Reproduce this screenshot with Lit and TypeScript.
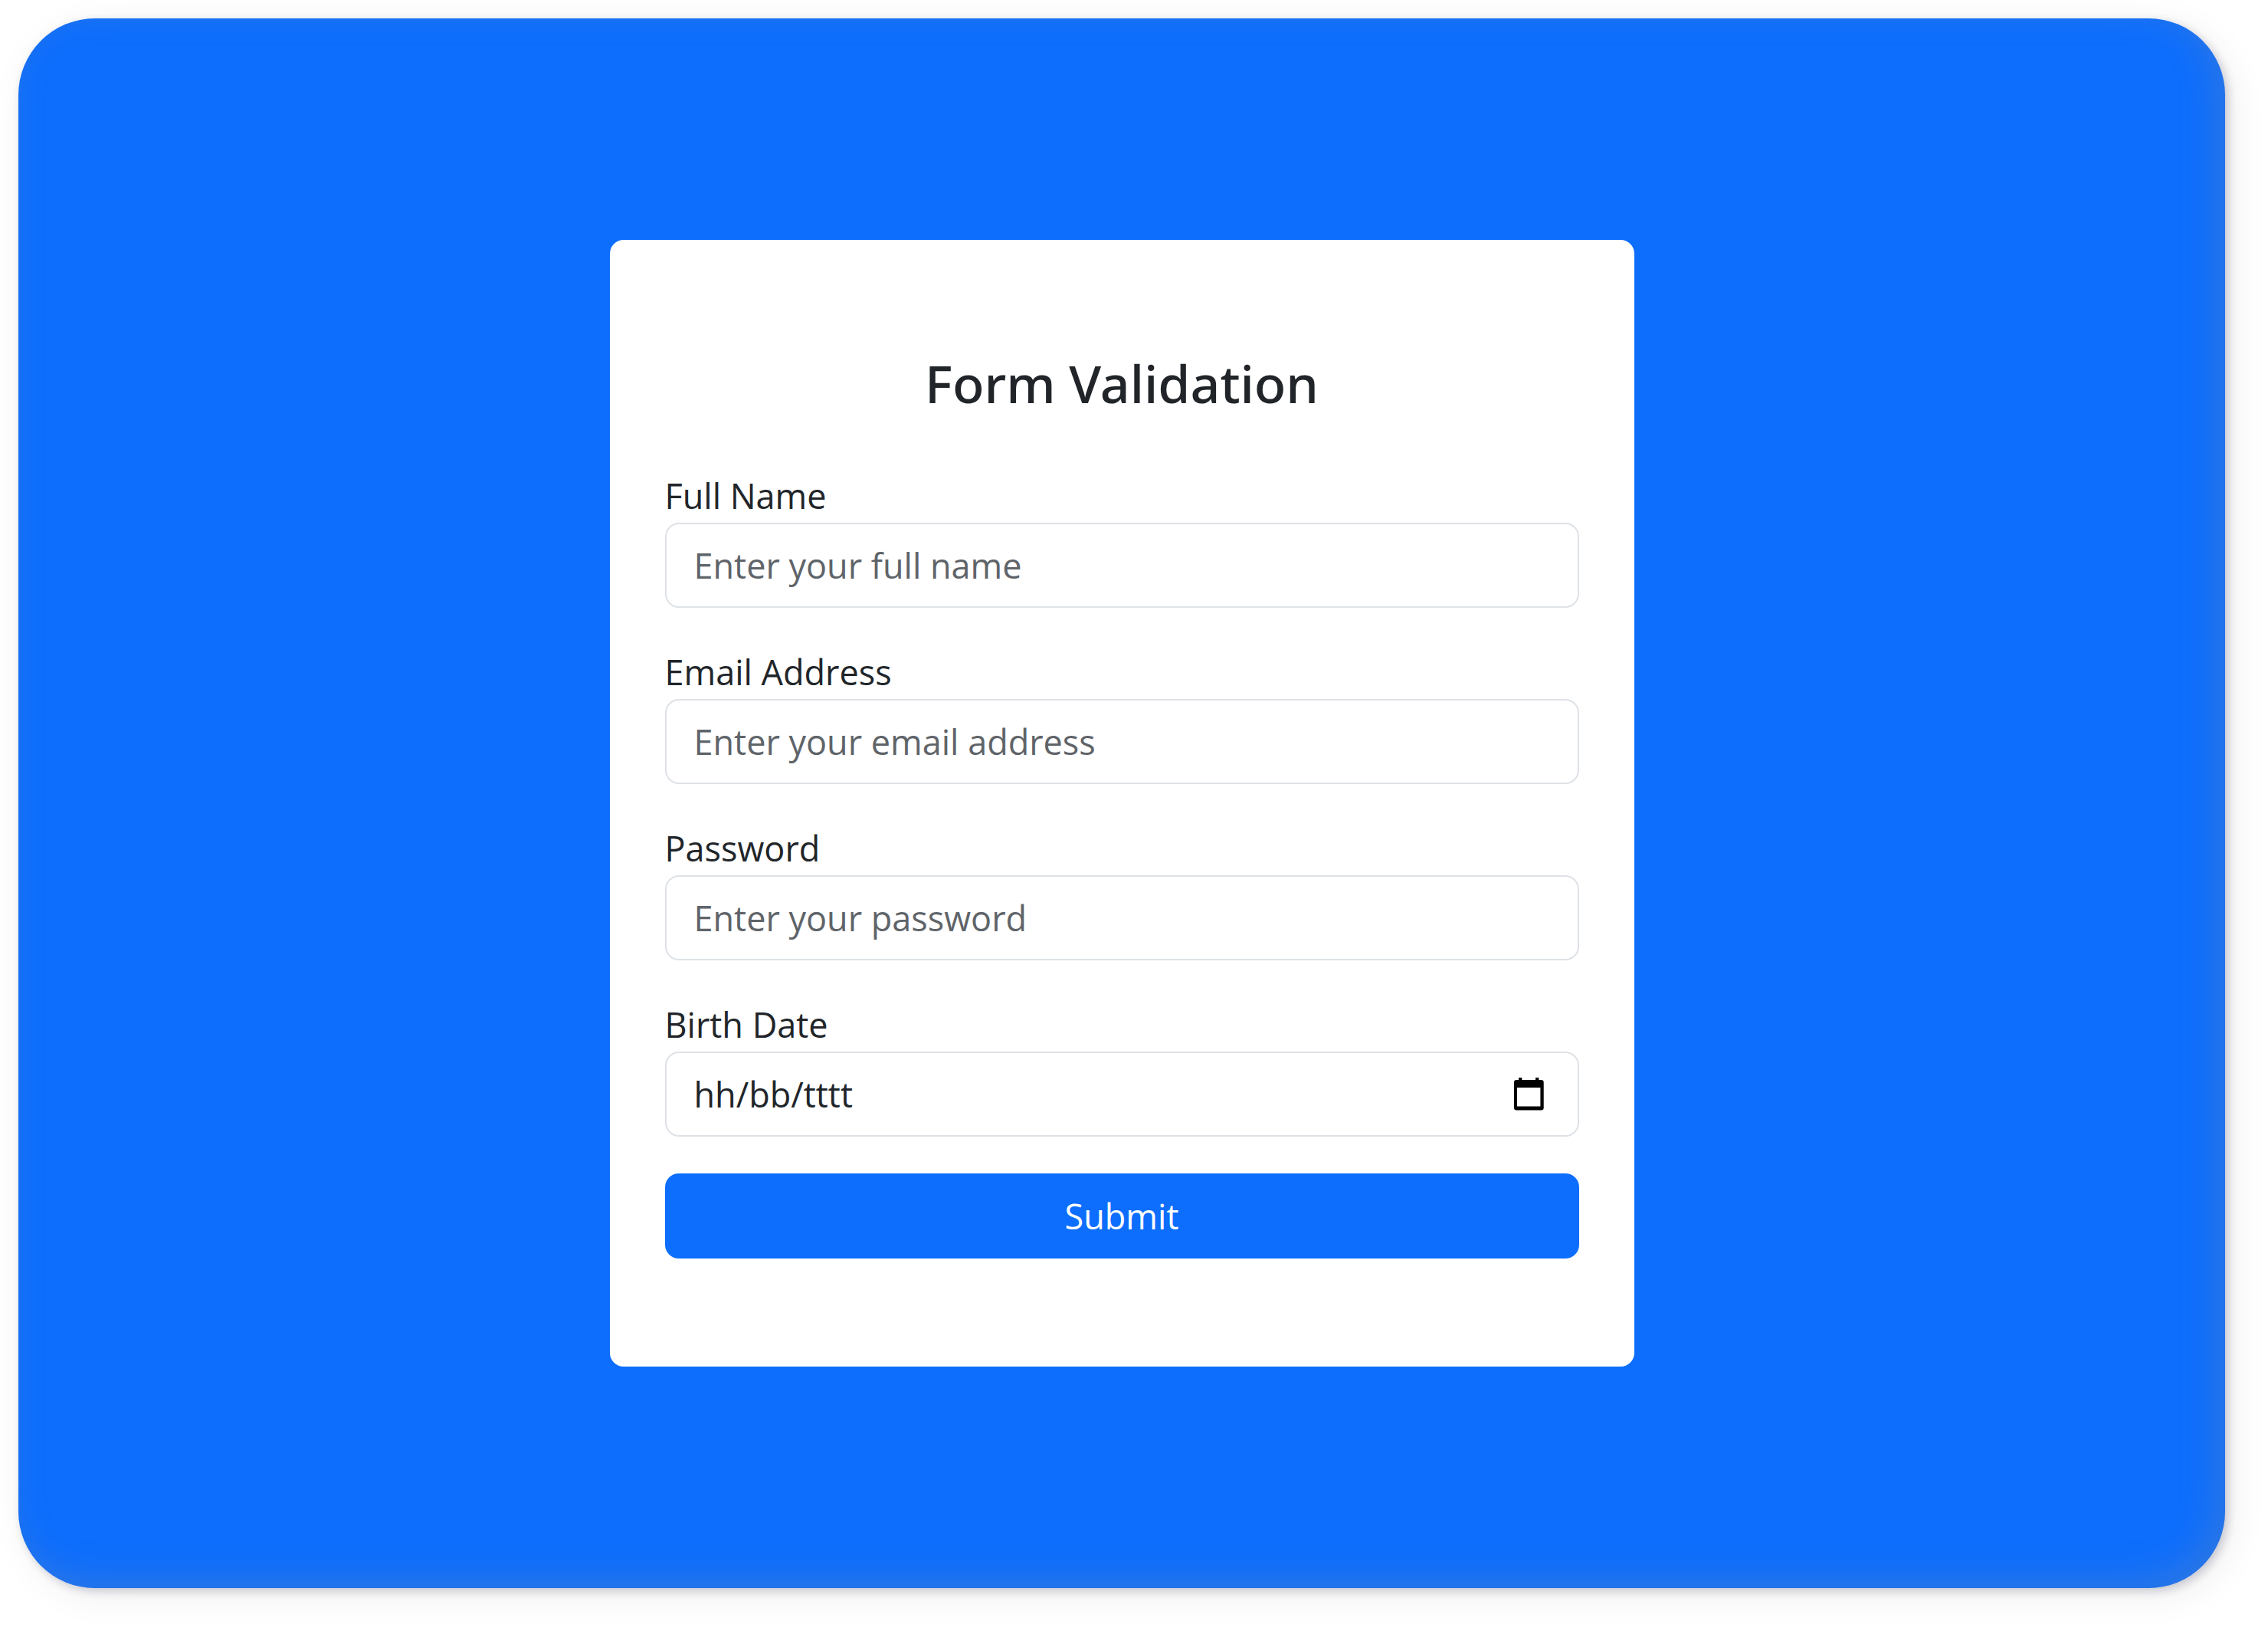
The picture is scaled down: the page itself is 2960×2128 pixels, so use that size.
import { LitElement, html, css, svg } from "lit";
import { customElement } from "lit/decorators.js";

interface Field {
  id: string;
  label: string;
  type: string;
  placeholder: string;
}

const fields: Field[] = [
  { id: "full-name", label: "Full Name", type: "text", placeholder: "Enter your full name" },
  { id: "email", label: "Email Address", type: "email", placeholder: "Enter your email address" },
  { id: "password", label: "Password", type: "password", placeholder: "Enter your password" },
];

const calendarIcon = svg`
  <svg class="calendar" viewBox="0 0 39 43" aria-hidden="true">
    <path fill="currentColor" fill-rule="evenodd"
      d="M6 0H10.3V3H28V0H32.3V3H35.5Q38.7 3 38.7 6V39.5Q38.7 42.5 35.5 42.5H3.2Q0 42.5 0 39.5V6Q0 3 3.2 3H6ZM4 13V37.5H34.4V13Z" />
  </svg>`;

@customElement("app-root")
export class AppRoot extends LitElement {
  static styles = css`
    :host {
      display: block;
      min-height: 100vh;
      box-sizing: border-box;
      padding: 24px 56px 56px 24px;
      background: #fff;
      color: #212529;
      font-family: "Segoe UI", "Open Sans", "Noto Sans", sans-serif;
      font-size: 45px;
      line-height: 71px;
    }
    *,
    *::before,
    *::after {
      box-sizing: border-box;
    }
    .panel {
      display: flex;
      align-items: center;
      justify-content: center;
      min-height: calc(100vh - 80px);
      border-radius: 100px;
      background: #0d6efd;
      box-shadow:
        inset -12px -12px 48px rgba(145, 145, 145, 0.24),
        4px 4px 12px rgba(20, 20, 70, 0.2),
        10px 10px 48px rgba(0, 0, 0, 0.07);
    }
    .card {
      width: 1337px;
      max-width: 100%;
      padding: 142px 72px 141px;
      border-radius: 18px;
      background: #fff;
    }
    .title {
      margin: 0 0 67px;
      font-family: "Segoe UI", "Noto Sans", sans-serif;
      font-size: 68px;
      font-weight: 500;
      line-height: 89px;
      text-align: center;
    }
    .form {
      display: flex;
      flex-direction: column;
      gap: 48px;
    }
    .field {
      display: flex;
      flex-direction: column;
    }
    .control,
    .submit {
      width: 100%;
      height: 111px;
      border-radius: 18px;
      font: inherit;
    }
    .control {
      padding: 0 36px;
      border: 2px solid #dee2e6;
      background: #fff;
      color: inherit;
      outline: none;
    }
    .control::placeholder {
      color: #5f6469;
      opacity: 1;
    }
    .date {
      display: flex;
      align-items: center;
      padding-right: 44px;
    }
    .date-input {
      flex: 1;
      min-width: 0;
      padding: 0;
      border: 0;
      background: none;
      color: inherit;
      font: inherit;
      outline: none;
    }
    .date-input::placeholder {
      color: inherit;
      opacity: 1;
    }
    .picker {
      display: flex;
      padding: 0;
      border: 0;
      background: none;
      color: #000;
      cursor: pointer;
    }
    .calendar {
      width: 39px;
      height: 43px;
    }
    .control:focus,
    .date:focus-within {
      border-color: #86b7fe;
    }
    .submit {
      padding: 0;
      border: 0;
      background: #0d6efd;
      color: #fff;
      cursor: pointer;
    }
  `;

  private openPicker() {
    this.renderRoot.querySelector<HTMLInputElement>("#birth-date")?.focus();
  }

  private onSubmit(event: Event) {
    event.preventDefault();
  }

  render() {
    return html`
      <main class="panel">
        <section class="card">
          <h2 class="title">Form Validation</h2>
          <form class="form" novalidate @submit=${this.onSubmit}>
            ${fields.map(
              (f) => html`
                <div class="field">
                  <label for=${f.id}>${f.label}</label>
                  <input class="control" id=${f.id} name=${f.id} type=${f.type} placeholder=${f.placeholder} />
                </div>
              `,
            )}
            <div class="field">
              <label for="birth-date">Birth Date</label>
              <div class="control date">
                <input class="date-input" id="birth-date" name="birth-date" type="text" placeholder="hh/bb/tttt" />
                <button class="picker" type="button" aria-label="Birth Date" @click=${this.openPicker}>
                  ${calendarIcon}
                </button>
              </div>
            </div>
            <button class="submit" type="submit">Submit</button>
          </form>
        </section>
      </main>
    `;
  }
}
